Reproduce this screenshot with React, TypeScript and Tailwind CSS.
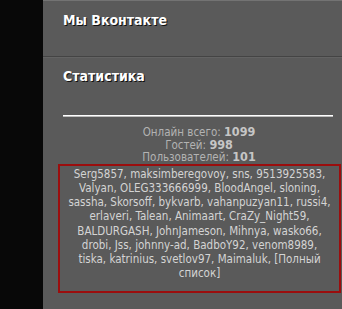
import React from 'react';

const names = [
  'Serg5857, maksimberegovoy, sns, 9513925583,',
  'Valyan, OLEG333666999, BloodAngel, sloning,',
  'sassha, Skorsoff, bykvarb, vahanpuzyan11, russi4,',
  'erlaveri, Talean, Animaart, CraZy_Night59,',
  'BALDURGASH, JohnJameson, Mihnya, wasko66,',
  'drobi, Jss, johnny-ad, BadboY92, venom8989,',
  'tiska, katrinius, svetlov97, Maimaluk, [Полный',
  'список]',
];

const stats = [
  { label: 'Онлайн всего:', value: '1099' },
  { label: 'Гостей:', value: '998' },
  { label: 'Пользователей:', value: '101' },
];

export default function App() {
  return (
    <div
      className="flex w-[342px] h-[309px] overflow-hidden bg-[#080808]"
      style={{ fontFamily: '"DejaVu Sans Condensed", "DejaVu Sans", sans-serif' }}
    >
      {/* Left dark column */}
      <div className="w-[43px] shrink-0 bg-[#080808]" />

      {/* Sidebar panel */}
      <div className="flex-1 bg-[#5a5a5a] border-t border-[#737373]">
        {/* VK block */}
        <div className="h-[56px] pl-[20px] pt-[10px] border-b border-[#444444]">
          <h3 className="text-[14px] font-bold leading-[18px] text-white [text-shadow:1px_1px_0_#111]">
            Мы Вконтакте
          </h3>
        </div>

        {/* Stats block */}
        <div className="border-t border-[#636363] pl-[15px] pt-[9px]">
          <h3 className="pl-[5px] text-[14px] font-bold leading-[18px] text-white [text-shadow:1px_1px_0_#111]">
            Статистика
          </h3>

          <div className="ml-[5px] mt-[30px] w-[270px] h-[2px] bg-white border-b border-[#bdbdbd]" />

          <div className="mt-[9px] flex flex-col items-center pr-[2px] text-[11.5px] leading-[12.5px] text-[#b3b3b3]">
            {stats.map((s) => (
              <div key={s.label} className="h-[12.5px]">
                {s.label} <b className="text-[12.5px] leading-[12.5px] text-[#c6c6c6]">{s.value}</b>
              </div>
            ))}
          </div>

          <div className="mt-[0.5px] w-[283px] h-[129px] border-2 border-[#9b0d0d] pt-[1px] text-center text-[11.5px] leading-[14.15px] text-[#d4d4d4]">
            {names.map((line) => (
              <div key={line}>{line}</div>
            ))}
          </div>
        </div>
      </div>
    </div>
  );
}
